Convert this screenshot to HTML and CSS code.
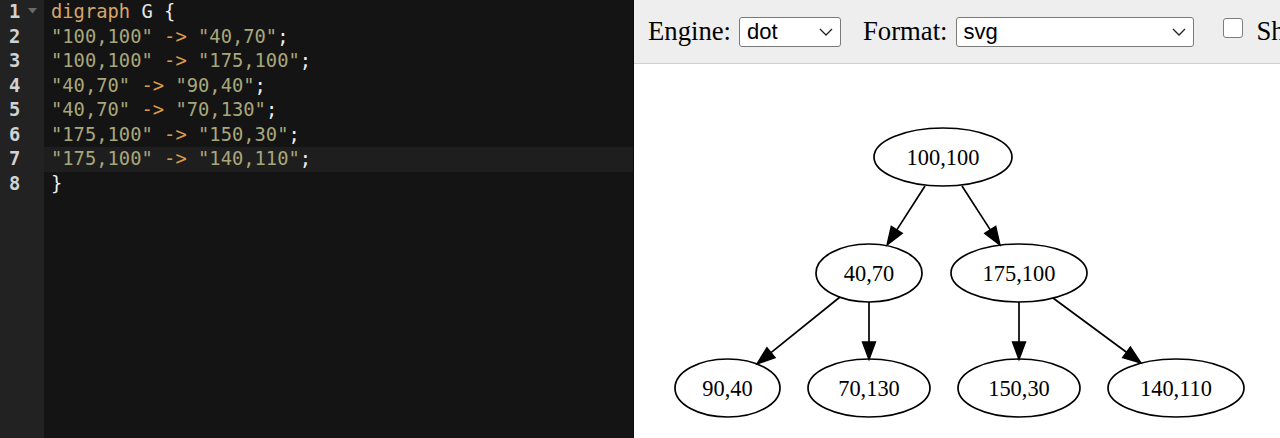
FILE: index.html
```html
<!DOCTYPE html>
<html>
<head>
<meta charset="utf-8">
<link rel="stylesheet" href="styles.css">
</head>
<body>
<div class="app">
  <div class="editor">
    <div class="gutter">
      <div class="ln">1<svg class="fold" width="9" height="6" viewBox="0 0 9 6"><path d="M0 0H9L4.5 5.5Z" fill="#6a6a6a"/></svg></div>
      <div class="ln">2</div>
      <div class="ln">3</div>
      <div class="ln">4</div>
      <div class="ln">5</div>
      <div class="ln">6</div>
      <div class="ln">7</div>
      <div class="ln">8</div>
    </div>
    <div class="code">
      <div class="line"><span class="kw">digraph</span> <span class="id">G</span> {</div>
      <div class="line"><span class="str">"100,100"</span> <span class="op">-&gt;</span> <span class="str">"40,70"</span>;</div>
      <div class="line"><span class="str">"100,100"</span> <span class="op">-&gt;</span> <span class="str">"175,100"</span>;</div>
      <div class="line"><span class="str">"40,70"</span> <span class="op">-&gt;</span> <span class="str">"90,40"</span>;</div>
      <div class="line"><span class="str">"40,70"</span> <span class="op">-&gt;</span> <span class="str">"70,130"</span>;</div>
      <div class="line"><span class="str">"175,100"</span> <span class="op">-&gt;</span> <span class="str">"150,30"</span>;</div>
      <div class="line active"><span class="str">"175,100"</span> <span class="op">-&gt;</span> <span class="str">"140,110"</span>;</div>
      <div class="line">}</div>
    </div>
  </div>
  <div class="panel">
    <div class="toolbar">
      <span class="label">Engine:</span>
      <div class="sel sel-engine">
        <select><option>dot</option></select>
        <svg class="chev" width="14" height="8" viewBox="0 0 14 8"><path d="M1 1L7 7L13 1" fill="none" stroke="#222" stroke-width="1.3"/></svg>
      </div>
      <span class="label label-format">Format:</span>
      <div class="sel sel-format">
        <select><option>svg</option></select>
        <svg class="chev" width="14" height="8" viewBox="0 0 14 8"><path d="M1 1L7 7L13 1" fill="none" stroke="#222" stroke-width="1.3"/></svg>
      </div>
      <input type="checkbox" class="check">
      <span class="label label-show">Show raw output</span>
    </div>
    <div class="canvas">
      <svg class="graph" width="646" height="374" viewBox="634 64 646 374">
        <g fill="none" stroke="#000" stroke-width="1.7">
          <ellipse cx="943" cy="157" rx="69" ry="29"/>
          <ellipse cx="869" cy="273" rx="53" ry="29"/>
          <ellipse cx="1019" cy="273" rx="68" ry="29"/>
          <ellipse cx="727.5" cy="388" rx="52.5" ry="29"/>
          <ellipse cx="869" cy="388" rx="61" ry="29"/>
          <ellipse cx="1019" cy="388" rx="61" ry="29"/>
          <ellipse cx="1176" cy="388" rx="68" ry="29"/>
          <path d="M925 186L896.8 229.9"/>
          <path d="M962 186L990.3 229.9"/>
          <path d="M840 297L771 352.7"/>
          <path d="M869 302V342"/>
          <path d="M1019 302V342"/>
          <path d="M1053 298L1126.5 352.3"/>
        </g>
        <g fill="#000" stroke="#000" stroke-width="1.4" stroke-linejoin="miter">
          <polygon points="891.29,226.35 887,245 902.21,233.39"/>
          <polygon points="984.79,233.39 1000,245 995.71,226.35"/>
          <polygon points="766.93,347.63 757,364 775.09,357.75"/>
          <polygon points="862.5,342 869,359.5 875.5,342"/>
          <polygon points="1012.5,342 1019,359.5 1025.5,342"/>
          <polygon points="1122.66,357.54 1141,363 1130.38,347.08"/>
        </g>
        <g class="nodetext" text-anchor="middle">
          <text x="943" y="164.5">100,100</text>
          <text x="869" y="280.5">40,70</text>
          <text x="1019" y="280.5">175,100</text>
          <text x="727.5" y="395.5">90,40</text>
          <text x="869" y="395.5">70,130</text>
          <text x="1019" y="395.5">150,30</text>
          <text x="1176" y="395.5">140,110</text>
        </g>
      </svg>
    </div>
  </div>
</div>
</body>
</html>
```

FILE: styles.css
```css
html, body {
  margin: 0;
  padding: 0;
  width: 1280px;
  height: 438px;
  overflow: hidden;
  background: #fff;
}

.app {
  display: flex;
  width: 1280px;
  height: 438px;
}

.editor {
  width: 634px;
  flex: none;
  display: flex;
  background: #141414;
  font-family: "DejaVu Sans Mono", "Liberation Mono", monospace;
  font-size: 18.8px;
  border-right: 1px solid #0b0b0b;
  box-sizing: border-box;
}

.gutter {
  width: 44px;
  flex: none;
  background: #222222;
  display: flex;
  flex-direction: column;
}

.ln {
  height: 24.5px;
  line-height: 24.5px;
  color: #d2d2d2;
  font-weight: bold;
  padding-left: 9px;
  display: flex;
  align-items: center;
  font-size: 18.8px;
}

.fold {
  margin-left: 8px;
  margin-top: -2px;
}

.code {
  flex: 1;
  display: flex;
  flex-direction: column;
}

.line {
  height: 24.5px;
  line-height: 24.5px;
  padding-left: 7px;
  color: #efefef;
  white-space: pre;
}

.line.active {
  background: #1e1e1e;
}

.kw { color: #d6a66a; }
.id { color: #e6e6e6; }
.str { color: #a8a77b; }
.op { color: #dd9b4a; }

.panel {
  flex: 1;
  display: flex;
  flex-direction: column;
  min-width: 0;
  overflow: hidden;
}

.toolbar {
  height: 63px;
  flex: none;
  background: #eeeeee;
  border-bottom: 1px solid #cfcfcf;
  display: flex;
  align-items: center;
  padding-left: 14px;
  white-space: nowrap;
  overflow: hidden;
}

.label {
  font-family: "Liberation Serif", "Times New Roman", serif;
  font-size: 26.7px;
  color: #000;
  flex: none;
}

.label-format {
  margin-left: 22px;
}

.label-show {
  margin-left: 14px;
}

.sel {
  position: relative;
  margin-left: 8px;
  flex: none;
}

.sel select {
  appearance: none;
  -webkit-appearance: none;
  height: 30px;
  box-sizing: border-box;
  border: 1px solid #7a7a7a;
  border-radius: 3px;
  background: #fff;
  font-family: "Liberation Sans", Arial, sans-serif;
  font-size: 22px;
  color: #000;
  padding: 0 0 0 7px;
  display: block;
  outline: none;
}

.sel-engine select { width: 102px; }
.sel-format select { width: 238px; }

.chev {
  position: absolute;
  right: 8px;
  top: 11px;
  pointer-events: none;
}

.check {
  appearance: none;
  -webkit-appearance: none;
  width: 20px;
  height: 20px;
  margin: 0 0 8px 29px;
  box-sizing: border-box;
  border: 1px solid #7d7d7d;
  border-radius: 3px;
  background: #fff;
  flex: none;
}

.canvas {
  flex: 1;
  background: #fff;
  overflow: hidden;
}

.graph {
  display: block;
}

.nodetext text {
  font-family: "Liberation Serif", "Times New Roman", serif;
  font-size: 22.4px;
  fill: #000;
}
```
